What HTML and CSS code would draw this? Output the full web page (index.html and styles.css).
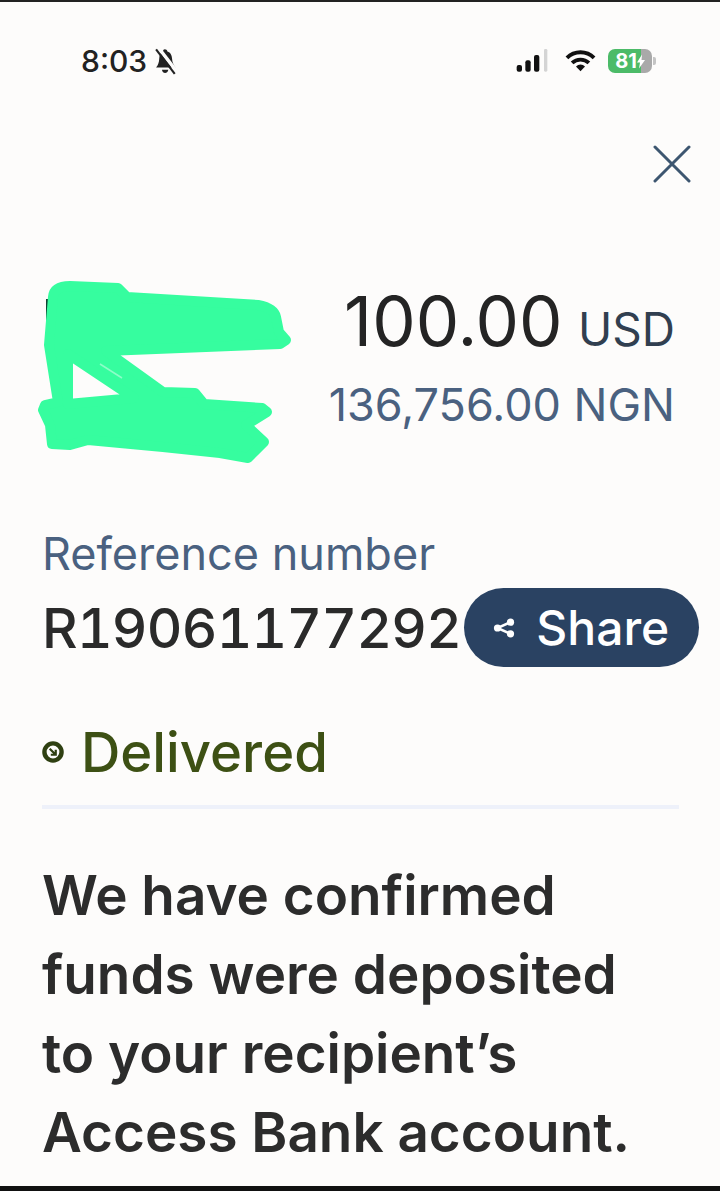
FILE: index.html

```html
<!DOCTYPE html>
<html lang="en">
<head>
  <meta charset="UTF-8" />
  <title>Transfer details</title>
  <link rel="stylesheet" href="styles.css">
</head>
<body>
  <div class="screen">
    <div class="status-bar">
      <div class="status-left">
        <span class="time">8:03</span>
        <svg class="bell" viewBox="0 0 20 24" width="24" height="28">
          <path d="M9 2c1 0 2 .6 2.200 1.800C14 4.600 15 7 15.200 10c.2 3 1 5 3 7.500H1.500C3.500 15 4 13 4.200 10 4.400 7 5 4.600 7.500 3.600 7.600 2.600 8 2 9 2z" fill="#222"/>
          <path d="M6.500 19.500h5.500c-.4 1.800-1.500 2.800-2.800 2.800s-2.300-1-2.700-2.800z" fill="#222"/>
          <path d="M3 0l17 22" stroke="#fdfcfb" stroke-width="3"/>
          <path d="M1.500 2l16 21" stroke="#222" stroke-width="1.800"/>
        </svg>
      </div>
      <div class="status-right">
        <svg viewBox="0 0 26 18" width="38" height="24">
          <rect x="0" y="12" width="4" height="5" rx="1.500" fill="#111"/>
          <rect x="6.500" y="8.500" width="4" height="8.500" rx="1.500" fill="#111"/>
          <rect x="13" y="4.500" width="4" height="12.500" rx="1.500" fill="#111"/>
          <rect x="20.500" y="0" width="2.500" height="17" rx="1" fill="#d4d4d4"/>
        </svg>
        <svg viewBox="0 0 24 18" width="31" height="24">
          <path d="M1.500 6.500a15 15 0 0 1 21 0M5.500 10.500a9.500 9.500 0 0 1 13 0" fill="none" stroke="#111" stroke-width="3"/>
          <path d="M8.500 13.200a5 5 0 0 1 7 0L12 17z" fill="#111"/>
        </svg>
        <div class="battery"><span>81</span><svg viewBox="0 0 8 14" width="8" height="15"><path d="M5 0L0 8h3l-1 6 6-8.500H4.500z" fill="#fff"/></svg></div>
      </div>
    </div>

    <div class="close-row">
      <svg viewBox="0 0 38 38" width="38" height="38">
        <path d="M2 2l34 34M36 2L2 36" stroke="#3d5670" stroke-width="3" stroke-linecap="round" fill="none"/>
      </svg>
    </div>

    <div class="amount-row">
      <svg class="scribble" viewBox="20 260 300 220" width="300" height="220">
        <path d="M46 297h3v28h-3zM47 427h4v5h-4zM216 426h4v4h-4zM243 424h8v6h-8z" fill="#143"/>
        <path fill="#36fd9f" stroke="#36fd9f" stroke-width="10" stroke-linejoin="round" fill-rule="evenodd" d="M53 295Q54 284 70 284L118 286 127 295 258 303Q274 306 276 315L279 330 286 338 280 342 106 349 163 390 195 391 204 402 262 406 267 410 246 423 264 440 248 456 220 451 163 445 88 438 70 443 52 442 50 423 43 408 45 403 58 400 49 343zM68 352L134 396 68 402z"/>
        <path d="M100 362L122 376" stroke="#8dfdc8" stroke-width="1.500" fill="none"/>
      </svg>
      <div class="amounts">
        <div class="amount-usd">100.00 <span class="currency">USD</span></div>
        <div class="amount-ngn">136,756.00 NGN</div>
      </div>
    </div>

    <div class="reference">
      <div class="reference-label">Reference number</div>
      <div class="reference-row">
        <span class="reference-number">R19061177292</span>
        <button class="share-btn">
          <svg viewBox="0 0 18 18" width="26" height="26">
            <path d="M13.500 5L4.500 9l9 4" stroke="#fff" stroke-width="1.800" fill="none"/>
            <circle cx="13.500" cy="5" r="2.500" fill="#fff"/>
            <circle cx="4.500" cy="9" r="2.500" fill="#fff"/>
            <circle cx="13.500" cy="13" r="2.500" fill="#fff"/>
          </svg>
          Share
        </button>
      </div>
    </div>

    <div class="delivered">
      <svg viewBox="0 0 20 20" width="22" height="22">
        <circle cx="10" cy="10" r="7.800" fill="none" stroke="#2f4012" stroke-width="4"/>
        <path d="M7 7l5 5M12.500 8v4.500H8" stroke="#2f4012" stroke-width="2" fill="none"/>
      </svg>
      <span>Delivered</span>
    </div>

    <hr class="divider">

    <h1 class="message">We have confirmed funds were deposited to your recipient’s Access Bank account.</h1>
  </div>
</body>
</html>
```

FILE: styles.css

```css
* {
  box-sizing: border-box;
}

html, body {
  margin: 0;
  height: 100%;
}

body {
  background: #111;
  font-family: Inter, "Liberation Sans", sans-serif;
  overflow: hidden;
}

.screen {
  height: 1191px;
  border-top: 2px solid #222;
  border-bottom: 5px solid #111;
  background: #fdfcfb;
  padding: 0 20px 0 42px;
  display: flex;
  flex-direction: column;
}

.status-bar {
  display: flex;
  justify-content: space-between;
  align-items: center;
  height: 30px;
  margin-top: 44px;
  padding: 0 48px 0 39px;
}

.status-left {
  display: flex;
  align-items: center;
  gap: 7px;
}

.time {
  font-size: 30px;
  font-weight: 500;
  color: #222;
}

.status-right {
  display: flex;
  align-items: center;
  gap: 12px;
}

.battery {
  position: relative;
  display: flex;
  align-items: center;
  justify-content: center;
  width: 44px;
  height: 24px;
  border-radius: 7px;
  background: linear-gradient(90deg, #4cbb68 76%, #a9a9a9 76%);
  color: #fff;
  font-size: 20px;
  font-weight: 700;
}

.battery::after {
  content: "";
  position: absolute;
  right: -4px;
  top: 8px;
  width: 3px;
  height: 8px;
  border-radius: 0 2px 2px 0;
  background: #c4c4c4;
}

.close-row {
  display: flex;
  justify-content: flex-end;
  margin-top: 69px;
  padding-right: 9px;
}

.amount-row {
  display: flex;
  justify-content: space-between;
  margin-top: 79px;
  margin-left: -22px;
  height: 220px;
}

.scribble {
  flex-shrink: 0;
}

.amounts {
  text-align: right;
  padding-right: 25px;
}

.amount-usd {
  font-size: 69px;
  line-height: 82px;
  margin-top: 18px;
  white-space: nowrap;
  color: #242424;
}

.currency {
  margin-left: -4px;
  font-size: 46px;
  color: #313f50;
}

.amount-ngn {
  font-size: 45px;
  line-height: 54px;
  margin-top: 8px;
  white-space: nowrap;
  color: #4a6180;
}

.reference {
  margin-top: 45px;
}

.reference-label {
  font-size: 45px;
  line-height: 54px;
  color: #4a6180;
}

.reference-row {
  display: flex;
  align-items: center;
  margin-top: 7px;
}

.reference-number {
  font-size: 55px;
  font-weight: 500;
  letter-spacing: -0.700px;
  white-space: nowrap;
  font-feature-settings: "tnum";
  color: #2a2a2a;
}

.share-btn {
  display: flex;
  flex-shrink: 0;
  align-items: center;
  gap: 19px;
  width: 235px;
  height: 79px;
  margin-left: 3px;
  padding: 0 0 0 27px;
  border: none;
  border-radius: 40px;
  background: #2a4262;
  color: #fff;
  font-family: inherit;
  font-size: 48px;
  font-weight: 500;
}

.delivered {
  display: flex;
  align-items: center;
  gap: 17px;
  margin-top: 52px;
  font-size: 54.500px;
  font-weight: 500;
  color: #3d5014;
}

.divider {
  height: 4px;
  margin: 20px 21px 0 0;
  border: none;
  background: #eef1fa;
}

.message {
  margin: 47px 0 0;
  max-width: 620px;
  font-size: 54.800px;
  line-height: 79px;
  font-weight: 600;
  color: #2c2c2c;
}
```
